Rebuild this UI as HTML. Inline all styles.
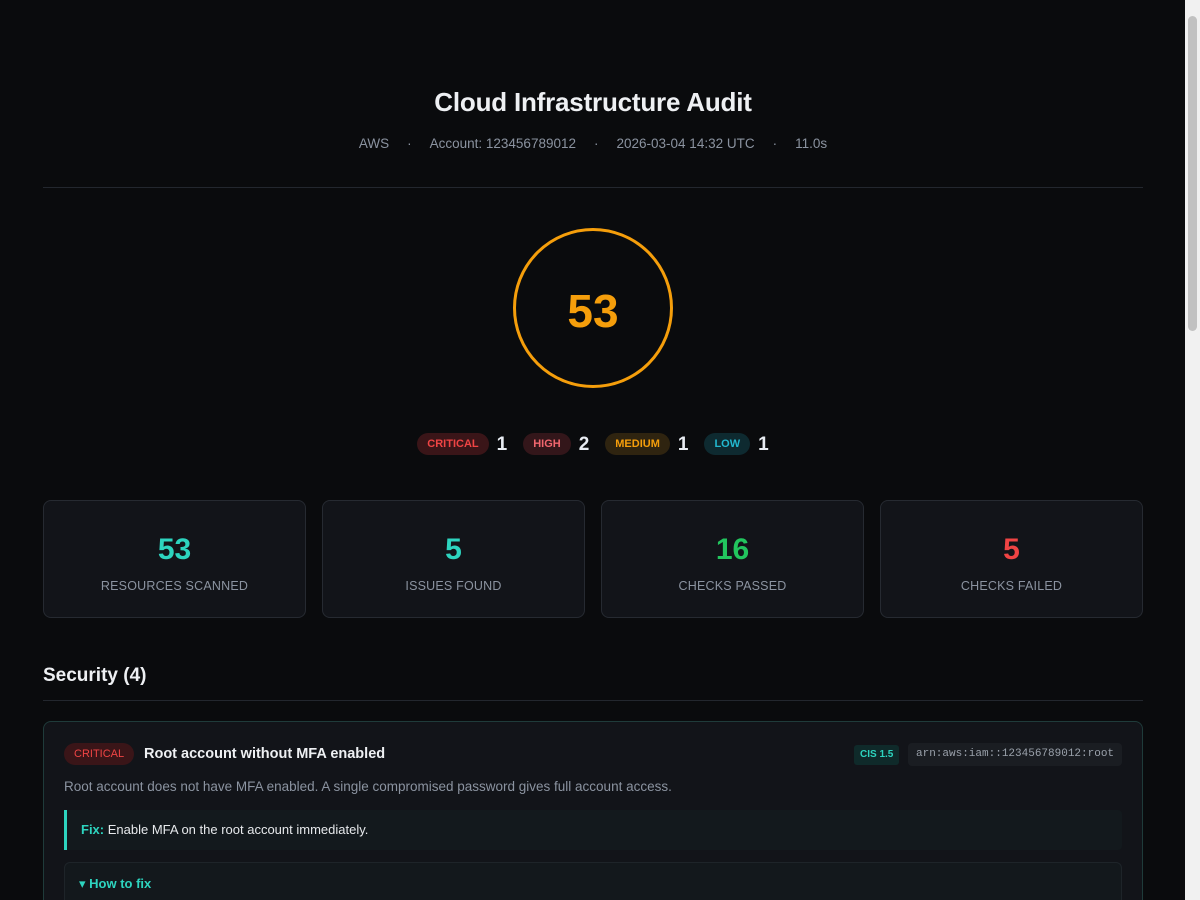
<!DOCTYPE html>
<html><head><meta charset="utf-8"><style>
html,body{margin:0;padding:0;overflow:hidden;}
body{background:#0a0b0d;width:1200px;height:900px;font-family:"Liberation Sans","DejaVu Sans",sans-serif;color:#e6e8eb;position:relative}
.wrap{position:absolute;left:43px;width:1100px;top:0}
h1{margin:0;position:absolute;top:87px;left:0;width:1100px;text-align:center;font-size:26px;font-weight:700;color:#eef0f3;letter-spacing:-0.2px}
.meta{position:absolute;top:136px;left:0;width:1100px;text-align:center;font-size:13.5px;color:#8b93a0}
.meta span{margin:0 18px}
.hr{position:absolute;left:0;width:1100px;height:1px;background:#23272e}
.ring{position:absolute;left:470px;top:228px;width:154px;height:154px;border:3px solid #f59e0b;border-radius:50%;text-align:center;line-height:160px;font-size:46px;font-weight:700;color:#f59e0b}
.sev{position:absolute;top:433px;left:0;width:1100px;text-align:center;font-size:0;padding-left:16px;box-sizing:border-box}
.pill{display:inline-block;font-size:11px;font-weight:700;padding:0 10px;height:22px;line-height:22px;border-radius:11px;letter-spacing:0;vertical-align:middle}
.num{display:inline-block;font-size:19px;font-weight:700;color:#e8ecf2;margin:0 16px 0 8px;vertical-align:middle;position:relative;top:1px}
.card{position:absolute;top:500px;width:261px;height:116px;background:#121419;border:1px solid #262a31;border-radius:8px;text-align:center}
.card .v{margin-top:32px;font-size:30px;font-weight:700;line-height:34px}
.card .l{margin-top:12px;font-size:12.5px;color:#8b93a0;letter-spacing:0.2px}
h2{position:absolute;top:665px;left:0;margin:0;font-size:19px;font-weight:700;color:#eef0f3}
.issue{position:absolute;top:721px;left:0;width:1098px;height:200px;background:#121419;border:1px solid #1f3b3a;border-radius:8px}
.scroll{position:absolute;right:0;top:0;width:15px;height:900px;background:#f1f1f1}
.thumb{position:absolute;right:3px;top:16px;width:9px;height:315px;background:#c1c1c1;border-radius:5px}
</style></head><body>
<div class="wrap">
<h1>Cloud Infrastructure Audit</h1>
<div class="meta"><span>AWS</span>·<span>Account: 123456789012</span>·<span>2026-03-04 14:32 UTC</span>·<span>11.0s</span></div>
<div class="hr" style="top:187px"></div>
<div class="ring">53</div>
<div class="sev"><span class="pill" style="background:#3a1518;color:#ef4444">CRITICAL</span><span class="num">1</span><span class="pill" style="background:#33161a;color:#f0666e">HIGH</span><span class="num">2</span><span class="pill" style="background:#2f2410;color:#f59e0b">MEDIUM</span><span class="num">1</span><span class="pill" style="background:#0e2a30;color:#22b8cf">LOW</span><span class="num">1</span></div>
<div class="card" style="left:0"><div class="v" style="color:#2dd4bf">53</div><div class="l">RESOURCES SCANNED</div></div>
<div class="card" style="left:279px"><div class="v" style="color:#2dd4bf">5</div><div class="l">ISSUES FOUND</div></div>
<div class="card" style="left:558px"><div class="v" style="color:#22c55e">16</div><div class="l">CHECKS PASSED</div></div>
<div class="card" style="left:837px"><div class="v" style="color:#ef4444">5</div><div class="l">CHECKS FAILED</div></div>
<h2>Security (4)</h2>
<div class="hr" style="top:700px"></div>
<div class="issue">
 <span class="pill" style="position:absolute;left:20px;top:21px;background:#3a1518;color:#ef4444;font-weight:400">CRITICAL</span>
 <div style="position:absolute;left:100px;top:24px;font-size:14.5px;font-weight:700;color:#eef0f3">Root account without MFA enabled</div>
 <div style="position:absolute;left:810px;top:23px;height:20px;line-height:20px;padding:0 6px;background:#0f2a2a;color:#2dd4bf;font-size:10px;font-weight:700;border-radius:3px">CIS 1.5</div>
 <div style="position:absolute;left:864px;top:21px;height:23px;line-height:23px;padding:0 8px;background:#1a1d22;color:#9aa1ab;font-family:'Liberation Mono',monospace;font-size:11px;border-radius:4px">arn:aws:iam::123456789012:root</div>
 <div style="position:absolute;left:20px;top:57px;font-size:13.5px;color:#8b93a0">Root account does not have MFA enabled. A single compromised password gives full account access.</div>
 <div style="position:absolute;left:20px;top:88px;height:40px;background:#13191d;border-left:3px solid #2dd4bf;border-radius:0 4px 4px 0;line-height:40px;font-size:13px;padding-left:14px;box-sizing:border-box;width:1058px;color:#e6e8eb"><b style="color:#2dd4bf">Fix:</b> Enable MFA on the root account immediately.</div>
 <div style="position:absolute;left:20px;top:140px;width:1056px;height:80px;background:#13181c;border:1px solid #1e2429;border-radius:6px"><div style="margin:13px 0 0 14px;font-size:13px;font-weight:700;color:#2dd4bf">▾ How to fix</div></div>
</div>
</div>
<div class="scroll"><div class="thumb"></div></div>
</body></html>
